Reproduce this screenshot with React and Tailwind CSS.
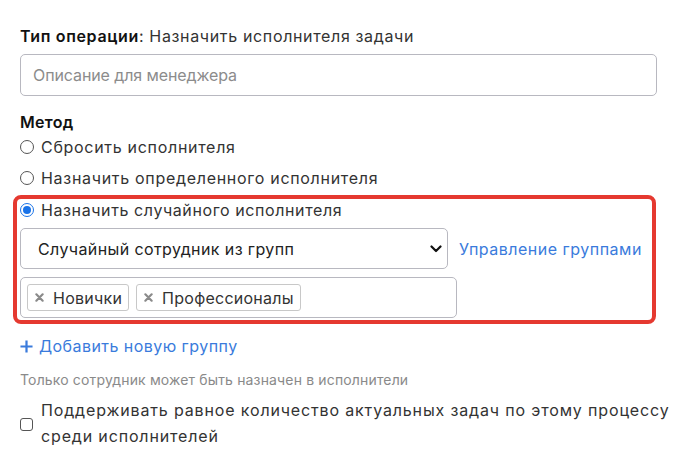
import React from "react";

function Radio({ checked }) {
  return (
    <span className="relative inline-flex h-[14px] w-[14px] shrink-0 items-center justify-center">
      {checked ? (
        <span className="flex h-[14px] w-[14px] items-center justify-center rounded-full border-[1.5px] border-[#1a73e8] bg-white">
          <span className="h-[8px] w-[8px] rounded-full bg-[#1a73e8]" />
        </span>
      ) : (
        <span className="h-[14px] w-[14px] rounded-full border border-[#555]" />
      )}
    </span>
  );
}

function Tag({ label }) {
  return (
    <span className="flex h-[27px] items-center gap-[9px] rounded-[3px] border border-[#c8c8c8] bg-white pl-[7px] pr-[6px] text-[16px] tracking-[0.25px] text-[#333]">
      <svg width="9" height="9" viewBox="0 0 10 10" className="shrink-0">
        <path d="M1.5 1.5 L8.5 8.5 M8.5 1.5 L1.5 8.5" stroke="#8a8a8a" strokeWidth="2.4" strokeLinecap="round" />
      </svg>
      {label}
    </span>
  );
}

export default function App() {
  return (
    <div
      className="min-h-[450px] w-[673px] bg-white pl-[20px] pr-[16px] pt-[24px] text-[#222]"
      style={{ fontFamily: "Inter, 'Noto Sans', sans-serif" }}
    >
      <div className="h-[24px] whitespace-nowrap text-[16px] leading-[24px] tracking-[0.65px]">
        <span className="font-semibold text-[#111]">Тип операции</span>
        <span className="text-[#333]">: Назначить исполнителя задачи</span>
      </div>
      <div className="mt-[6px] flex h-[42px] w-[637px] items-center rounded-[5px] border border-[#b8b8c0] px-[12px] text-[16px] tracking-[-0.1px] text-[#8c8c8c]">
        Описание для менеджера
      </div>
      <div className="mt-[14px] h-[24px] text-[16px] font-semibold leading-[24px] tracking-[0.3px] text-[#111]">Метод</div>
      <div className="mt-[1px] flex h-[24px] items-center gap-[7px] text-[16px] tracking-[0.7px] text-[#333]">
        <Radio />
        <span>Сбросить исполнителя</span>
      </div>
      <div className="mt-[7px] flex h-[24px] items-center gap-[7px] whitespace-nowrap text-[16px] tracking-[0.7px] text-[#333]">
        <Radio />
        <span>Назначить определенного исполнителя</span>
      </div>
      <div className="ml-[-7px] mt-[5px] w-[643px] rounded-[8px] border-[4px] border-[#e53930] pb-[2px] pl-[3px] pr-[4px] pt-[0px]">
        <div className="flex h-[22px] items-center gap-[7px] whitespace-nowrap text-[16px] tracking-[0.6px] text-[#333]">
          <Radio checked />
          <span>Назначить случайного исполнителя</span>
        </div>
        <div className="mt-[7px] flex items-center gap-[11px]">
          <div className="flex h-[41px] w-[428px] items-center justify-between rounded-[5px] border border-[#b8b8c0] pl-[17px] pr-[5px] text-[16px] tracking-[0.4px] text-[#222]">
            <span>Случайный сотрудник из групп</span>
            <svg width="12" height="8" viewBox="0 0 12 8">
              <path d="M1.5 1.5 L6 6 L10.5 1.5" stroke="#111" strokeWidth="2.2" fill="none" strokeLinecap="round" strokeLinejoin="round" />
            </svg>
          </div>
          <span className="whitespace-nowrap text-[16px] tracking-[0.5px] text-[#3a7bdc]">Управление группами</span>
        </div>
        <div className="mt-[8px] flex h-[41px] w-[437px] items-center gap-[7px] rounded-[5px] border border-[#b8b8c0] pl-[6px]">
          <Tag label="Новички" />
          <Tag label="Профессионалы" />
        </div>
      </div>
      <div className="mt-[10px] flex h-[24px] items-center gap-[6px] text-[16px] tracking-[0.45px] text-[#3a7bdc]">
        <svg width="13" height="13" viewBox="0 0 14 14">
          <path d="M7 0.5 V13.5 M0.5 7 H13.5" stroke="#3a7bdc" strokeWidth="2.4" />
        </svg>
        <span>Добавить новую группу</span>
      </div>
      <div className="mt-[12px] h-[20px] whitespace-nowrap text-[14px] leading-[20px] tracking-[0.15px] text-[#8a8a8a]">
        Только сотрудник может быть назначен в исполнители
      </div>
      <div className="mt-[7px] flex items-center gap-[8px] whitespace-nowrap text-[16px] leading-[26px] tracking-[0.85px] text-[#333]">
        <span className="mt-[2px] h-[13px] w-[13px] shrink-0 rounded-[3px] border border-[#555]" />
        <span>
          Поддерживать равное количество актуальных задач по этому процессу
          <br />
          среди исполнителей
        </span>
      </div>
    </div>
  );
}
